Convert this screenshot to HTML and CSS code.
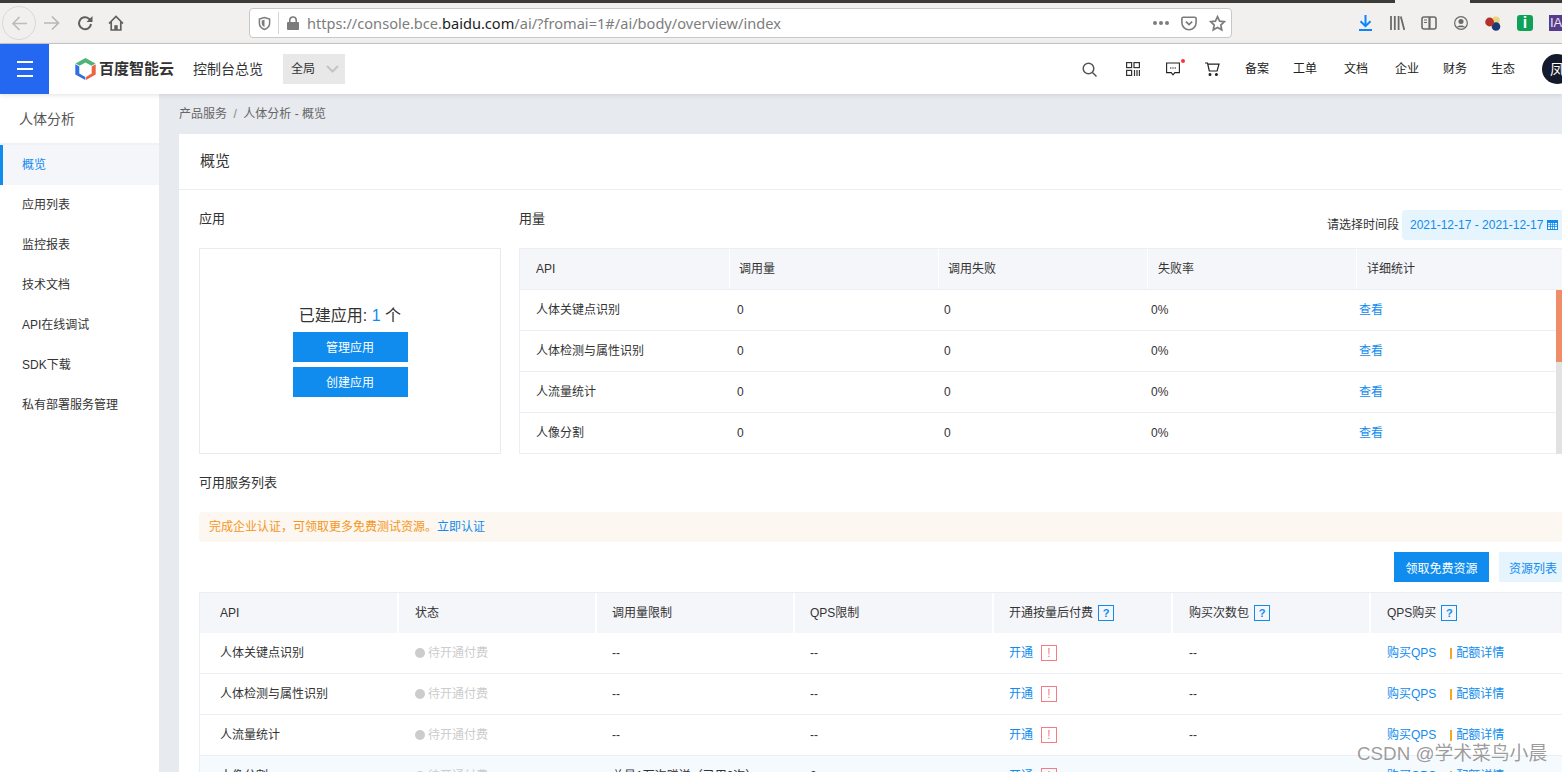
FILE: index.html
```html
<!DOCTYPE html>
<html lang="zh">
<head>
<meta charset="utf-8">
<title>百度智能云</title>
<link rel="stylesheet" href="styles.css">
</head>
<body>
<div class="page">
  <div class="topstrip"><span class="strip-dark strip-a"></span><span class="strip-gap"></span><span class="strip-dark strip-b"></span></div>
  <div class="browserbar">
    <span class="nav-back"><svg width="17" height="17" viewBox="0 0 17 17" fill="none" stroke="#bcbcbc" stroke-width="1.700"><path d="M16 8.500H2M8.500 2 2 8.500 8.500 15"/></svg></span>
    <svg class="nav-forward" width="16" height="16" viewBox="0 0 16 16" fill="none" stroke="#b8b8b8" stroke-width="1.700"><path d="M0 8h14.500M8 1.500 14.500 8 8 14.500"/></svg>
    <svg class="nav-reload" width="16" height="16" viewBox="0 0 16 16" fill="none" stroke="#5f5f5f" stroke-width="2"><path d="M14 9a6 6 0 1 1-2-5.300l2 2"/><path d="M15.500 1v6h-6z" fill="#5f5f5f" stroke="none"/></svg>
    <svg class="nav-home" width="16" height="16" viewBox="0 0 16 16" fill="none" stroke="#5f5f5f" stroke-width="1.700"><path d="M1 8.500 8 1.500l7 7M3.200 7v8h9.600V7"/><path d="M6.300 15v-4.800h3.400V15z" fill="#5f5f5f" stroke="none"/></svg>
    <div class="urlbar">
      <svg class="url-shield" width="13" height="15" viewBox="0 0 14 15" fill="none" stroke="#7c7c7c" stroke-width="1.600"><path d="M7 1 1.500 2.600v5C1.500 10.800 4.500 13 7 14c2.500-1 5.500-3.200 5.500-6.400v-5z"/><path d="M7 3.500 4 4.400v3.200C4 9.600 5.700 10.800 7 11.500z" fill="#7c7c7c" stroke="none"/></svg>
      <span class="url-sep"></span>
      <svg class="url-lock" width="12" height="14" viewBox="0 0 13 15"><path d="M1 6.500h11a1 1 0 0 1 1 1V14a1 1 0 0 1-1 1H1a1 1 0 0 1-1-1V7.500a1 1 0 0 1 1-1z" fill="#7c7c7c"/><path d="M3 7V4.500a3.500 3.500 0 0 1 7 0V7" fill="none" stroke="#7c7c7c" stroke-width="1.700"/></svg>
      <span class="url-text">https://console.bce.<b class="url-host">baidu.com</b>/ai/?fromai=1#/ai/body/overview/index</span>
      <span class="url-dots"><i></i><i></i><i></i></span>
      <svg class="url-pocket" width="16" height="15" viewBox="0 0 18 16" fill="none" stroke="#7c7c7c" stroke-width="1.800"><path d="M2.500 1h13A1.500 1.500 0 0 1 17 2.500V7a8 8 0 0 1-16 0V2.500A1.500 1.500 0 0 1 2.500 1z"/><path d="m5.500 5.800 3.500 3.400 3.500-3.400" stroke-width="2"/></svg>
      <svg class="url-star" width="17" height="17" viewBox="0 0 18 18" fill="none" stroke="#7c7c7c" stroke-width="1.800"><path d="m9 1.800 2.200 4.700 5 .6-3.700 3.500 1 5.100L9 13.200l-4.500 2.500 1-5.100L1.800 7.100l5-.6z"/></svg>
    </div>
    <svg class="tb-download" width="13" height="16" viewBox="0 0 13 16" fill="none" stroke="#0a84ff" stroke-width="2"><path d="M6.500 0v11M1.500 6.200l5 5 5-5M0 15h13"/></svg>
    <svg class="tb-library" width="15" height="14" viewBox="0 0 15 14" fill="none" stroke="#6a6a6a" stroke-width="1.800"><path d="M1 0v14M4.800 0v14M8.600 0v14M10.800.500 14.300 14"/></svg>
    <svg class="tb-sidebar" width="16" height="14" viewBox="0 0 16 14" fill="none" stroke="#6a6a6a" stroke-width="1.600"><rect x="1" y="1" width="14" height="12" rx="2"/><path d="M8.500 1v12" stroke-width="2.200"/><path d="M3 4h3M3 6.500h3" stroke-width="1"/></svg>
    <svg class="tb-account" width="14" height="14" viewBox="0 0 15 15" fill="none" stroke="#6a6a6a" stroke-width="1.300"><circle cx="7.500" cy="7.500" r="6.800"/><circle cx="7.500" cy="6" r="2.700" fill="#6a6a6a" stroke="none"/><path d="M3 12c1-2.600 8-2.600 9 0" fill="#6a6a6a" stroke="none"/></svg>
    <svg class="tb-balls" width="16" height="15" viewBox="0 0 16 15"><circle cx="10.800" cy="4.500" r="4" fill="#e9d37f"/><circle cx="11" cy="10.500" r="4.300" fill="#1b3a78"/><circle cx="4.600" cy="6" r="4.400" fill="#b4302a"/></svg>
    <span class="tb-info">i</span>
    <span class="tb-ia">IA</span>
  </div>

  <header class="appbar">
    <button class="menu-btn" type="button" aria-label="菜单"><i></i><i></i><i></i></button>
    <div class="logo">
      <svg width="21" height="22" viewBox="0 0 21 22"><path d="M10.500 0 20.500 5.500 16.500 7.800 10.500 4.500 4.500 7.800 0.500 5.500z" fill="#4fb478"/><path d="M0.300 6.300 4.300 8.600v7l6 3.300V22l-10-5.500z" fill="#2f6fe0"/><path d="M20.700 6.300 16.700 8.600v7l-5.700 3.300V22l9.700-5.500z" fill="#ea6440"/></svg>
      <span class="logo-text">百度智能云</span>
    </div>
    <span class="console-link">控制台总览</span>
    <div class="region">全局<svg width="13" height="8" viewBox="0 0 13 8" fill="none" stroke="#c4c4c4" stroke-width="2"><path d="m1 1 5.500 5.500L12 1"/></svg></div>
    <div class="appbar-right">
      <svg class="ico-search" width="15" height="15" viewBox="0 0 15 15" fill="none" stroke="#555" stroke-width="1.500"><circle cx="6.500" cy="6.500" r="5.300"/><path d="m10.500 10.500 4 4"/></svg>
      <svg class="ico-qr" width="14" height="14" viewBox="0 0 14 14" fill="none" stroke="#333" stroke-width="1.200"><rect x=".6" y=".6" width="5" height="5"/><rect x="8" y=".6" width="5.400" height="5"/><rect x=".6" y="8.400" width="5" height="5"/><path d="M8.500 8v6M11 8v6M13.400 8v6"/></svg>
      <span class="ico-msg"><svg width="14" height="14" viewBox="0 0 14 14" fill="none" stroke="#222" stroke-width="1.100"><path d="M.6 1h12.800v9.600H8.800L7 12.800 5.200 10.600H.6z"/><path d="M4 6h1.400M6.300 6h1.400M8.600 6H10" stroke-width="1"/></svg><i class="msg-dot"></i></span>
      <svg class="ico-cart" width="15" height="14" viewBox="0 0 15 14" fill="none" stroke="#222" stroke-width="1.200"><path d="M0 1h2.500l1.800 8h7.800L14 2.200H3"/><circle cx="5" cy="12.400" r=".9" fill="#222"/><circle cx="11.400" cy="12.400" r=".9" fill="#222"/></svg>
      <a class="top-link link-a">备案</a>
      <a class="top-link link-b">工单</a>
      <a class="top-link link-c">文档</a>
      <a class="top-link link-d">企业</a>
      <a class="top-link link-e">财务</a>
      <a class="top-link link-f">生态</a>
      <span class="avatar">凤</span>
    </div>
  </header>

  <div class="layout">
    <aside class="sidebar">
      <div class="side-title">人体分析</div>
      <nav class="side-nav">
        <a class="side-item is-active">概览</a>
        <a class="side-item">应用列表</a>
        <a class="side-item">监控报表</a>
        <a class="side-item">技术文档</a>
        <a class="side-item">API在线调试</a>
        <a class="side-item">SDK下载</a>
        <a class="side-item">私有部署服务管理</a>
      </nav>
    </aside>
    <main class="content">
      <div class="crumbs">产品服务<span class="crumb-sep">/</span>人体分析 - 概览</div>
      <section class="card">
        <h1 class="card-title">概览</h1>
        <div class="card-body">
          <div class="top-row">
            <div class="apps">
              <h2 class="sec-title">应用</h2>
              <div class="apps-box">
                <p class="apps-count">已建应用: <span class="blue">1</span> 个</p>
                <button class="btn btn-app" type="button">管理应用</button>
                <button class="btn btn-app" type="button">创建应用</button>
              </div>
            </div>
            <div class="usage">
              <div class="usage-head">
                <h2 class="sec-title">用量</h2>
                <div class="range"><span class="range-label">请选择时间段</span><span class="range-input">2021-12-17 - 2021-12-17<svg width="11" height="10" viewBox="0 0 11 10"><path d="M0 0h11v10H0z" fill="#108cee"/><path d="M1 3h9v6H1z" fill="#fff"/><path d="M1 4.700h9M1 6.500h9M3.500 3v6M5.500 3v6M7.500 3v6" stroke="#108cee" stroke-width=".8"/></svg></span></div>
              </div>
              <div class="usage-table">
                <div class="u-row u-head"><span>API</span><span>调用量</span><span>调用失败</span><span>失败率</span><span>详细统计</span></div>
                <div class="u-row"><span>人体关键点识别</span><span>0</span><span>0</span><span>0%</span><a class="blue">查看</a></div>
                <div class="u-row"><span>人体检测与属性识别</span><span>0</span><span>0</span><span>0%</span><a class="blue">查看</a></div>
                <div class="u-row"><span>人流量统计</span><span>0</span><span>0</span><span>0%</span><a class="blue">查看</a></div>
                <div class="u-row"><span>人像分割</span><span>0</span><span>0</span><span>0%</span><a class="blue">查看</a></div>
                <div class="scrollbar"></div>
              </div>
            </div>
          </div>
          <h2 class="sec-title services-title">可用服务列表</h2>
          <div class="notice">完成企业认证，可领取更多免费测试资源。<a class="blue">立即认证</a></div>
          <div class="actions">
            <button class="btn btn-free" type="button">领取免费资源</button>
            <button class="btn btn-list" type="button">资源列表</button>
          </div>
          <div class="svc-table">
            <div class="s-row s-head">
              <span>API</span><span>状态</span><span>调用量限制</span><span>QPS限制</span>
              <span>开通按量后付费<i class="q">?</i></span><span>购买次数包<i class="q">?</i></span><span>QPS购买<i class="q">?</i></span>
            </div>
            <div class="s-row">
              <span>人体关键点识别</span><span class="pending"><i class="dot"></i>待开通付费</span><span>--</span><span>--</span>
              <span class="open"><a class="blue">开通</a><i class="warn">!</i></span><span>--</span><span class="buy"><a class="blue">购买QPS</a><i class="bar"></i><a class="blue">配额详情</a></span>
            </div>
            <div class="s-row">
              <span>人体检测与属性识别</span><span class="pending"><i class="dot"></i>待开通付费</span><span>--</span><span>--</span>
              <span class="open"><a class="blue">开通</a><i class="warn">!</i></span><span>--</span><span class="buy"><a class="blue">购买QPS</a><i class="bar"></i><a class="blue">配额详情</a></span>
            </div>
            <div class="s-row">
              <span>人流量统计</span><span class="pending"><i class="dot"></i>待开通付费</span><span>--</span><span>--</span>
              <span class="open"><a class="blue">开通</a><i class="warn">!</i></span><span>--</span><span class="buy"><a class="blue">购买QPS</a><i class="bar"></i><a class="blue">配额详情</a></span>
            </div>
            <div class="s-row s-hover">
              <span>人像分割</span><span class="pending"><i class="dot"></i>待开通付费</span><span>总量1万次赠送（已用0次）</span><span>2</span>
              <span class="open"><a class="blue">开通</a><i class="warn">!</i></span><span>--</span><span class="buy"><a class="blue">购买QPS</a><i class="bar"></i><a class="blue">配额详情</a></span>
            </div>
          </div>
        </div>
      </section>
    </main>
  </div>
  <div class="watermark">CSDN @学术菜鸟小晨</div>
</div>
</body>
</html>
```

FILE: styles.css
```css
* { box-sizing: border-box; }
html, body { margin: 0; padding: 0; }
body { font-family: "Liberation Sans", "Noto Sans CJK SC", sans-serif; font-size: 12px; color: #333; background: #fff; }
a { color: inherit; text-decoration: none; }
i { font-style: normal; }
h1, h2, p { margin: 0; font-weight: 400; }
button { font-family: inherit; font-size: 12px; border: 0; padding: 0; }
.blue { color: #108cee; }

.page { position: relative; width: 1562px; height: 772px; overflow: hidden; display: flex; flex-direction: column; }

.topstrip { height: 3px; display: flex; flex: none; background: #f1f0ee; }
.strip-dark { background: #3c3b37; }
.strip-a { width: 1395px; }
.strip-gap { width: 75px; }
.strip-b { flex: 1; }

.browserbar { height: 41px; flex: none; background: #f1f0ee; border-bottom: 1px solid #c9c9c9; display: flex; align-items: center; padding-left: 2px; }
.nav-back { width: 34px; height: 34px; border: 1px solid #d8d8d8; border-radius: 50%; display: flex; align-items: center; justify-content: center; flex: none; }
.nav-forward { margin-left: 8px; flex: none; }
.nav-reload { margin-left: 17px; flex: none; }
.nav-home { margin-left: 15px; flex: none; }
.urlbar { width: 983px; height: 30px; margin-left: 125px; background: #fff; border: 1px solid #c8c8c8; border-radius: 4px; display: flex; align-items: center; padding-left: 8px; flex: none; }
.url-shield { flex: none; }
.url-sep { width: 1px; height: 22px; background: #d4d4d4; margin-left: 7px; flex: none; }
.url-lock { margin-left: 8px; flex: none; }
.url-text { font-family: "Noto Sans", sans-serif; font-size: 14.600px; color: #7d7d7d; margin-left: 8px; white-space: nowrap; width: 800px; flex: none; }
.url-host { font-weight: 400; color: #1c1c1c; }
.url-dots { display: flex; gap: 2px; margin-left: 46px; flex: none; }
.url-dots i { width: 4px; height: 4px; border-radius: 50%; background: #7c7c7c; }
.url-pocket { margin-left: 12px; flex: none; }
.url-star { margin-left: 12px; flex: none; }
.tb-download { margin-left: 127px; flex: none; }
.tb-library { margin-left: 18px; flex: none; }
.tb-sidebar { margin-left: 16px; flex: none; }
.tb-account { margin-left: 17px; flex: none; }
.tb-balls { margin-left: 17px; flex: none; }
.tb-info { margin-left: 16px; width: 16px; height: 16px; border-radius: 3px; background: #0ea158; color: #fff; font-weight: 700; font-size: 16px; line-height: 16px; text-align: center; flex: none; }
.tb-ia { margin-left: 16px; width: 13px; height: 16px; background: #553c8b; color: #e9e5f4; font-size: 13px; line-height: 16px; padding-left: 1px; flex: none; overflow: hidden; white-space: nowrap; }

.appbar { height: 50px; flex: none; background: #fff; display: flex; align-items: center; position: relative; z-index: 2; box-shadow: 0 1px 5px rgba(0,0,0,.12); line-height: 18px; }
.menu-btn { width: 49px; height: 50px; background: #2468f2; display: flex; flex-direction: column; align-items: center; justify-content: center; gap: 5px; flex: none; }
.menu-btn i { width: 16px; height: 2px; background: #fff; }
.logo { margin-left: 26px; display: flex; align-items: center; gap: 3px; flex: none; }
.logo-text { font-size: 15px; font-weight: 700; color: #333; width: 76px; white-space: nowrap; }
.console-link { font-size: 14px; margin-left: 18px; color: #333; flex: none; }
.region { width: 62px; height: 30px; margin-left: 20px; background: #e8e8e8; display: flex; align-items: center; padding-left: 8px; gap: 11px; color: #333; flex: none; }
.appbar-right { margin-left: auto; display: flex; align-items: center; width: 480px; flex: none; height: 50px; }
.ico-search { flex: none; }
.ico-qr { margin-left: 29px; flex: none; }
.ico-msg { margin-left: 26px; position: relative; display: flex; flex: none; }
.msg-dot { position: absolute; top: -3px; right: -5px; width: 4px; height: 4px; border-radius: 50%; background: #f33; }
.ico-cart { margin-left: 25px; flex: none; }
.top-link { color: #222; flex: none; width: 24px; white-space: nowrap; }
.link-a { margin-left: 25px; }
.link-b { margin-left: 24px; }
.link-c { margin-left: 27px; }
.link-d { margin-left: 27px; }
.link-e { margin-left: 24px; }
.link-f { margin-left: 24px; }
.avatar { margin-left: 27px; width: 30px; height: 30px; border-radius: 50%; background: #14192b; color: #fff; font-size: 14px; line-height: 30px; padding-left: 8px; flex: none; overflow: hidden; }

.layout { flex: 1; display: flex; min-height: 0; }
.sidebar { width: 159px; flex: none; background: #fff; }
.side-title { height: 51px; padding-left: 19px; font-size: 14px; line-height: 50px; color: #555; border-bottom: 2px solid #f0f1f4; }
.side-item { display: block; height: 40px; line-height: 40px; padding-left: 22px; color: #333; }
.side-item.is-active { background: #f5f6fa; color: #108cee; border-left: 3px solid #108cee; padding-left: 19px; }

.content { flex: 1; min-width: 0; background: #e7eaef; padding-left: 20px; overflow: hidden; }
.crumbs { height: 40px; line-height: 40px; color: #666; }
.crumb-sep { margin: 0 6.500px; color: #888; }
.card { width: 1500px; background: #fff; height: 700px; }
.card-title { height: 56px; font-size: 15px; line-height: 54px; padding-left: 21px; color: #333; border-bottom: 1px solid #ebeef2; }
.card-body { padding: 0 20px; }
.top-row { display: flex; gap: 18px; }
.apps { width: 302px; flex: none; }
.sec-title { font-size: 13px; line-height: 18px; color: #333; padding-top: 20px; height: 58px; }
.apps-box { height: 206px; border: 1px solid #ebebeb; display: flex; flex-direction: column; align-items: center; padding-top: 57px; }
.apps-count { font-size: 16px; line-height: 20px; color: #333; margin-bottom: 6px; }
.btn-app { width: 115px; height: 30px; background: #108cee; color: #fff; margin-bottom: 5px; padding-bottom: 1px; flex: none; }
.usage { width: 1043px; flex: none; }
.usage-head { height: 58px; display: flex; justify-content: space-between; }
.range { display: flex; align-items: center; height: 30px; margin-top: 20px; line-height: 18px; }
.range-label { color: #333; margin-right: 3px; }
.range-input { height: 30px; width: 160px; background: #e6f4fe; color: #108cee; border-radius: 4px 0 0 4px; padding-left: 8px; display: flex; align-items: center; gap: 4px; white-space: nowrap; }
.usage-table { position: relative; border: 1px solid #ebeef2; border-width: 1px 0 0 1px; height: 206px; overflow: hidden; width: 1043px; }
.u-row { height: 41px; display: grid; grid-template-columns: 201px 207px 207px 208px 212px; align-items: center; border-bottom: 1px solid #ebeef5; padding-left: 16px; line-height: 18px; }
.u-head { background: #f5f6fa; border-bottom: 1px solid #ebeef2; padding-left: 0; grid-template-columns: 210px 209px 209px 209px 209px; align-items: stretch; }
.u-head > span { line-height: 40px; padding-left: 10px; border-right: 1px solid #fff; }
.u-head > :nth-child(1) { padding-left: 16px; }
.u-head > :nth-child(2), .u-head > :nth-child(3) { padding-left: 9px; }
.scrollbar { position: absolute; left: 1036px; top: 41px; width: 6px; height: 164px; background: linear-gradient(#ee8d67 0 72px, #e2e2e2 72px); }

.services-title { height: 58px; padding-top: 20px; }
.notice { height: 30px; border-radius: 4px 0 0 4px; background: #fcf7f1; color: #f5961a; line-height: 30px; padding-left: 10px; }
.actions { display: flex; gap: 10px; margin-top: 10px; height: 30px; }
.btn-free { width: 95px; height: 30px; background: #108cee; color: #fff; margin-left: 1195px; flex: none; }
.btn-list { width: 100px; height: 30px; background: #e6f4fe; color: #108cee; text-align: left; padding-left: 10px; flex: none; }
.svc-table { margin-top: 10px; border-left: 1px solid #ebeef2; border-top: 1px solid #ebeef2; width: 1400px; }
.s-row { height: 41px; display: grid; grid-template-columns: 199px 198px 198px 199px 179px 198px 230px; align-items: center; border-bottom: 1px solid #ebeef5; line-height: 18px; }
.s-row > span { padding-left: 15px; }
.s-row > :nth-child(1) { padding-left: 20px; }
.s-row > :nth-child(2), .s-row > :nth-child(6), .s-row > :nth-child(7) { padding-left: 16px; }
.s-head { height: 40px; background: #f5f6fa; align-items: stretch; border-bottom: 0; }
.s-head > span { line-height: 40px; border-right: 2px solid #fff; display: flex; align-items: center; }
.s-hover { background: #f5faff; }
.pending { color: #ccc; display: flex; align-items: center; }
.dot { width: 10px; height: 10px; border-radius: 50%; background: #ccc; margin-right: 3px; flex: none; }
.q { display: inline-block; width: 16px; height: 16px; margin-left: 5px; border: 1px solid #108cee; color: #108cee; font-weight: 700; font-size: 11px; line-height: 14px; text-align: center; }
.open { display: flex; align-items: center; }
.warn { display: inline-block; width: 16px; height: 16px; margin-left: 8px; border: 1px solid #f57c87; color: #f57c87; font-size: 12px; line-height: 14px; text-align: center; }
.buy { display: flex; align-items: center; }
.bar { width: 2px; height: 11px; background: #f5a623; margin: 1px 4px 0 14px; flex: none; }

.watermark { position: absolute; left: 1357px; top: 743px; font-size: 18.800px; line-height: 22px; color: rgba(60,60,60,.52); white-space: nowrap; z-index: 3; text-shadow: 0 0 1px rgba(255,255,255,.8); }
```
